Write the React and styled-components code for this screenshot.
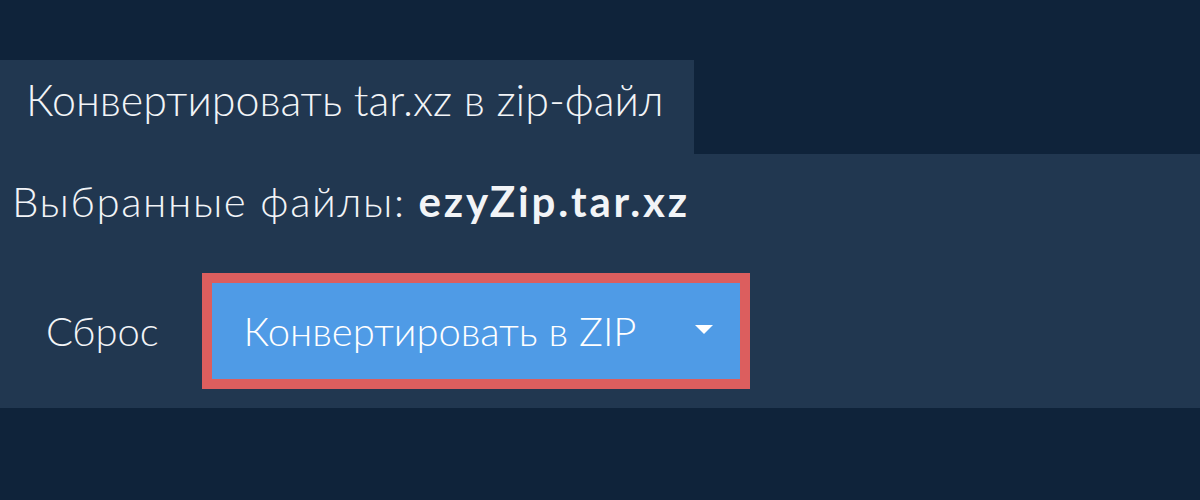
import React from "react";
import styled, { createGlobalStyle } from "styled-components";

const GlobalStyle = createGlobalStyle`
  html, body {
    margin: 0;
    padding: 0;
    background: #0f233a;
    font-family: Lato, "Noto Sans", sans-serif;
  }
`;

const Page = styled.div`
  width: 1200px;
  height: 500px;
  padding-top: 60px;
  box-sizing: border-box;
`;

const Tab = styled.div`
  width: 694px;
  height: 94px;
  background: #213750;
  color: #f2f4f7;
  font-size: 43px;
  font-weight: 300;
  padding: 14px 0 0 26px;
  box-sizing: border-box;
`;

const Panel = styled.div`
  background: #213750;
  height: 254px;
  padding: 22px 0 0 12px;
  box-sizing: border-box;
`;

const Selected = styled.div`
  color: #f2f4f7;
  font-size: 42px;
  font-weight: 300;
  letter-spacing: 1.6px;

  b {
    font-weight: 700;
    letter-spacing: 2.8px;
  }
`;

const Actions = styled.div`
  display: flex;
  align-items: center;
  gap: 43px;
  margin-top: 47px;
  padding-left: 34px;
`;

const Reset = styled.button`
  background: none;
  border: none;
  color: #f2f4f7;
  font-family: inherit;
  font-size: 40px;
  font-weight: 300;
  padding: 0;
  cursor: pointer;
`;

const Convert = styled.button`
  display: flex;
  align-items: center;
  width: 548px;
  height: 116px;
  box-sizing: border-box;
  border: 10px solid #dc5e5e;
  background: #4f9be6;
  color: #ffffff;
  font-family: inherit;
  font-size: 40px;
  font-weight: 300;
  padding: 0 27px 0 32px;
  cursor: pointer;
`;

const Label = styled.span`
  flex: 1;
  text-align: left;
`;

const Caret = styled.svg`
  width: 18px;
  height: 9px;
  margin-top: -4px;
`;

export default function App() {
  return (
    <>
      <GlobalStyle />
      <Page>
        <Tab>Конвертировать tar.xz в zip-файл</Tab>
        <Panel>
          <Selected>
            Выбранные файлы: <b>ezyZip.tar.xz</b>
          </Selected>
          <Actions>
            <Reset>Сброс</Reset>
            <Convert>
              <Label>Конвертировать в ZIP</Label>
              <Caret viewBox="0 0 18 9">
                <path d="M0 0h18L9 9z" fill="#fff" />
              </Caret>
            </Convert>
          </Actions>
        </Panel>
      </Page>
    </>
  );
}
